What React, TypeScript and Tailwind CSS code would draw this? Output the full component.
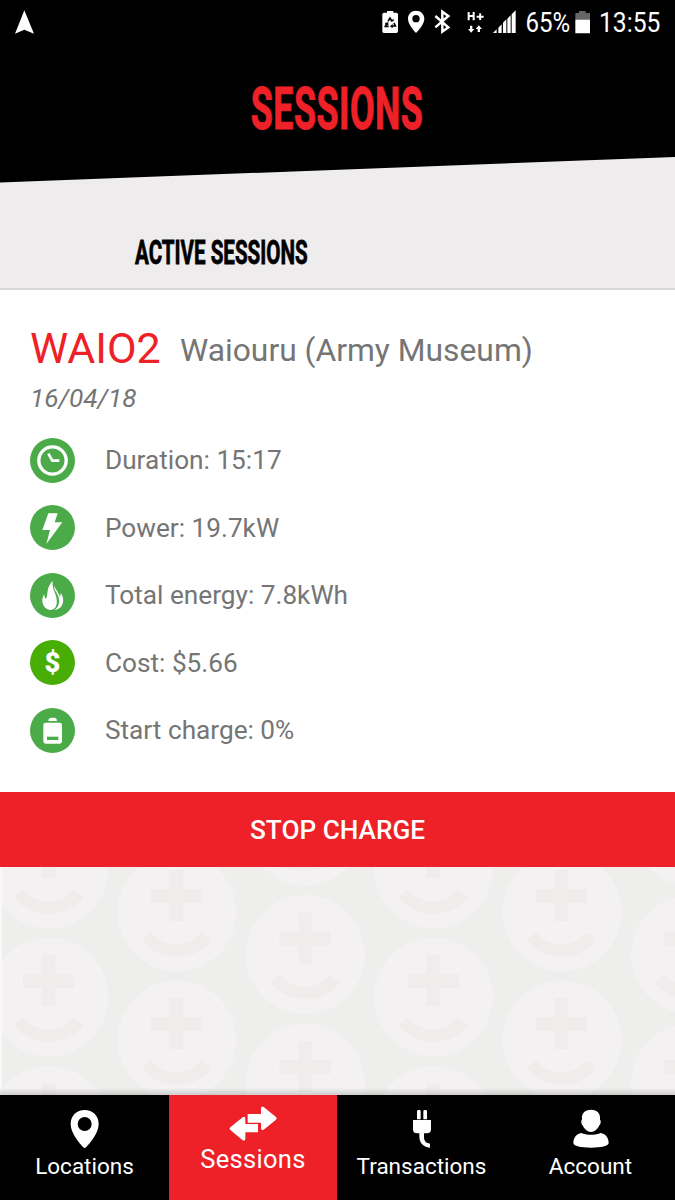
import type { ReactNode } from "react";

const faces = [
  { x: 49, y: 2 },
  { x: 49, y: 130 },
  { x: 49, y: 258.5 },
  { x: 177, y: 45 },
  { x: 177, y: 173 },
  { x: 305.5, y: -41 },
  { x: 305.5, y: 87.5 },
  { x: 305.5, y: 216 },
  { x: 433.7, y: 2 },
  { x: 433.7, y: 130 },
  { x: 433.7, y: 258.5 },
  { x: 562, y: 45 },
  { x: 562, y: 173 },
  { x: 690.5, y: -41 },
  { x: 690.5, y: 87.5 },
  { x: 690.5, y: 216 },
];

function Pattern() {
  return (
    <svg className="block h-full w-full" viewBox="0 0 675 228">
      {faces.map((f) => (
        <g key={`${f.x}-${f.y}`} transform={`translate(${f.x} ${f.y})`}>
          <circle r="59.5" fill="#f3f1f2" />
          <path d="M-7.3-42H6.3V-23H25V-9H6.3V9H-7.3V-9H-26V-23H-7.3Z" fill="#eeedec" />
          <path d="M-30.5 24.5A39 39 0 0 0 29.5 24.5" fill="none" stroke="#eeedec" strokeWidth="12.3" />
        </g>
      ))}
    </svg>
  );
}

function Badge({ color = "#4bab48", children }: { color?: string; children: ReactNode }) {
  return (
    <svg className="h-[45px] w-[45px] shrink-0" viewBox="0 0 135 135">
      <circle cx="67.5" cy="67.5" r="67.5" fill={color} />
      {children}
    </svg>
  );
}

function Row({ icon, text }: { icon: ReactNode; text: string }) {
  return (
    <div className="flex h-[45px] items-center gap-[30px]">
      {icon}
      <span className="whitespace-nowrap text-[26.200px] leading-[30px] text-[#757575]">{text}</span>
    </div>
  );
}

function StatusBar() {
  return (
    <div className="flex h-[46px] items-start justify-between text-white">
      <svg className="h-[46px] w-[40px]" viewBox="0 0 120 138">
        <path d="M73 31L102 101L73 89L45 101Z" fill="#fff" />
      </svg>
      <div className="flex h-[46px]">
        <svg className="h-[46px] w-[152px]" viewBox="0 0 456 138" fill="#fff">
          <path d="M42 38H51V33H70V38H79Q84 38 84 43V94Q84 99 79 99H42Q37 99 37 94V43Q37 38 42 38Z" />
          <g fill="none" stroke="#000" strokeWidth="5">
            <path d="M54 64L60 54L66 64M72 69L76 78H66M56 79H46L50 69" />
          </g>
          <path d="M61 64H71V56ZM68 72V85L60 79ZM44 69L55 67L55 77Z" fill="#000" />
          <path fillRule="evenodd" d="M138 32C124 32 114 42 114 56C114 71 130 90 138 99C147 90 163 71 163 56C163 42 152 32 138 32ZM138 45A11 11 0 1 1 138 67A11 11 0 1 1 138 45Z" />
          <path d="M196 48L235 82L217 95V35L235 48L196 82" fill="none" stroke="#fff" strokeWidth="7.5" />
          <path d="M296 36V61M311 36V61M296 48H311M320 50H341M330.500 40V60" fill="none" stroke="#fff" strokeWidth="6" />
          <path d="M300 77H307V87H313L303.500 98L294 87H300ZM323 96H330V87H336L326.500 76L317 87H323Z" />
          <path d="M369 99L380 88V99ZM385 83L395 73V99H385ZM399 68L409 58V99H399ZM412 56L422 46V99H412ZM425 43L437 31V99H425Z" />
        </svg>
        <span className="w-[45px] origin-left scale-x-[0.86] whitespace-nowrap pl-[4px] pt-[6px] text-[28px] leading-[34px]">65%</span>
        <svg className="ml-[8px] mt-[11px] h-[23px] w-[15px]" viewBox="0 0 45 69">
          <path d="M1 6H12V0H32V6H45V27H1Z" fill="#666" />
          <path d="M1 26H45V67H1Z" fill="#fff" />
        </svg>
        <span className="ml-[9px] w-[76px] origin-left scale-x-[0.88] whitespace-nowrap pt-[6px] text-[28px] leading-[34px]">13:55</span>
      </div>
    </div>
  );
}

export default function App() {
  return (
    <div className="flex h-[1200px] w-[675px] flex-col overflow-hidden bg-white font-['Roboto',sans-serif]">
      <header className="h-[183px] bg-black [clip-path:polygon(0_0,100%_0,100%_157px,0_182.500px)]">
        <StatusBar />
        <h1 className="flex h-[125px] items-center justify-center text-[58.500px] font-bold leading-[70px] tracking-[0.8px] text-[#ed2127]">
          <span className="inline-block scale-x-[0.612] [-webkit-text-stroke:1px_#ed2127]">SESSIONS</span>
        </h1>
      </header>
      <section className="-mt-[27px] h-[134px] shrink-0 border-b-2 border-[#d8d8d8] bg-[#eeeced] pl-[135px] pt-[76px]">
        <h2 className="inline-block origin-left scale-x-[0.605] whitespace-nowrap text-[34px] font-bold leading-[40px] text-black [-webkit-text-stroke:0.800px_#000]">ACTIVE SESSIONS</h2>
      </section>
      <main className="h-[502px] shrink-0 bg-white px-[30px] pt-[30px]">
        <div className="flex h-[60px] items-start">
          <span className="w-[150px] text-[43px] leading-[56px] text-[#ed2127]">WAIO2</span>
          <span className="whitespace-nowrap pt-[2px] text-[31.800px] leading-[56px] text-[#757575]">Waiouru (Army Museum)</span>
        </div>
        <p className="h-[57.500px] pt-[3px] text-[26.200px] italic leading-[30px] text-[#757575]">16/04/18</p>
        <div className="flex flex-col gap-[22.500px]">
          <Row
            text="Duration: 15:17"
            icon={
              <Badge>
                <circle cx="67.500" cy="67.500" r="41" fill="none" stroke="#fff" strokeWidth="10" />
                <path d="M55 47L67 68H88" fill="none" stroke="#fff" strokeWidth="8" />
              </Badge>
            }
          />
          <Row
            text="Power: 19.7kW"
            icon={
              <Badge>
                <path d="M55 25H83L74 52H97L49 117L60 75H37Z" fill="#fff" />
              </Badge>
            }
          />
          <Row
            text="Total energy: 7.8kWh"
            icon={
              <Badge>
                <path d="M68 24C66 46 75 57 78 69C84 91 80 109 62 111C46 111 36 97 37 79C38 71 41 66 43 64C43 70 44 75 48 77C53 70 51 57 55 45C58 36 63 29 68 24Z" fill="#fff" />
                <path d="M73 37C74 49 86 56 89 71C91 69 92 64 92 60C98 68 101 78 99 88C96 102 87 110 73 111C87 101 90 88 85 71C81 57 70 51 73 37Z" fill="#fff" />
              </Badge>
            }
          />
          <Row
            text="Cost: $5.66"
            icon={
              <Badge color="#48ad05">
                <text x="67.500" y="96" textAnchor="middle" fontSize="82" fontWeight="900" fontFamily="Roboto" fill="#fff">$</text>
              </Badge>
            }
          />
          <Row
            text="Start charge: 0%"
            icon={
              <Badge>
                <path d="M55 39Q55 29 65 29H71Q81 29 81 39Z" fill="#fff" />
                <rect x="40" y="44" width="56" height="63" rx="7" fill="#fff" />
                <rect x="51" y="86" width="34" height="10" fill="#4bab48" />
              </Badge>
            }
          />
        </div>
      </main>
      <button className="h-[75px] shrink-0 bg-[#ed2127] pt-[2px] text-[26.200px] font-medium text-white">STOP CHARGE</button>
      <div className="relative h-[228px] shrink-0 overflow-hidden bg-[#eeeeec]">
        <Pattern />
        <div className="absolute inset-y-0 left-0 w-[2px] bg-[#f8f8f8]" />
        <div className="absolute inset-x-0 bottom-0 h-[7px] bg-linear-to-b from-transparent to-black/15" />
      </div>
      <nav className="flex h-[105px] shrink-0 bg-black text-center text-[22.500px] text-white">
        <div className="flex w-[169px] flex-col items-center pt-[14px]">
          <svg className="h-[39px] w-[30px]" viewBox="0 0 90 117">
            <path fillRule="evenodd" d="M44 3C20 3 2 20 2 45C2 73 28 102 40 115Q44 119 48 115C60 102 86 73 86 45C86 20 68 3 44 3ZM44 24A21 21 0 1 1 44 66A21 21 0 1 1 44 24Z" fill="#fff" />
          </svg>
          <span className="mt-[3px] leading-[30px]">Locations</span>
        </div>
        <div className="flex w-[168px] flex-col items-center bg-[#ed2127] pt-[10px]">
          <svg className="h-[36px] w-[48px]" viewBox="0 0 144 108">
            <path d="M56 27H96V10Q97 2 104 6L141 36Q145 40 141 44L104 74Q97 78 96 70V53H56Z" fill="#fff" />
            <path d="M87 57H49V42Q48 32 41 37L4 67Q0 71 4 75L41 106Q48 109 49 102V82H87Z" fill="#fff" />
          </svg>
          <span className="mt-[3px] text-[25.500px] leading-[30px] tracking-[0.3px]">Sessions</span>
        </div>
        <div className="flex w-[169px] flex-col items-center pt-[14px]">
          <svg className="h-[39px] w-[18px]" viewBox="0 0 54 117">
            <path d="M12 31V7Q12 3 16 3H19Q23 3 23 7V31ZM31 31V7Q31 3 35 3H38Q42 3 42 7V31ZM0 33H54V61Q54 73 42 73H33V84C33 97 39 102 51 104V116C29 114 19 101 19 82V73H12Q0 73 0 61Z" fill="#fff" />
          </svg>
          <span className="mt-[3px] leading-[30px]">Transactions</span>
        </div>
        <div className="flex w-[169px] flex-col items-center pt-[14px]">
          <svg className="h-[39px] w-[36px]" viewBox="0 0 108 117">
            <path d="M54 2C35 2 25 13 27 32C23 34 25 46 29 49C34 61 43 69 54 69C65 69 74 61 79 49C83 46 85 34 81 32C83 13 73 2 54 2ZM25 72C38 79 70 79 83 72C99 74 107 88 107 102C107 111 84 116 54 116C24 116 1 111 1 102C1 88 9 74 25 72Z" fill="#fff" />
          </svg>
          <span className="mt-[3px] leading-[30px]">Account</span>
        </div>
      </nav>
    </div>
  );
}
